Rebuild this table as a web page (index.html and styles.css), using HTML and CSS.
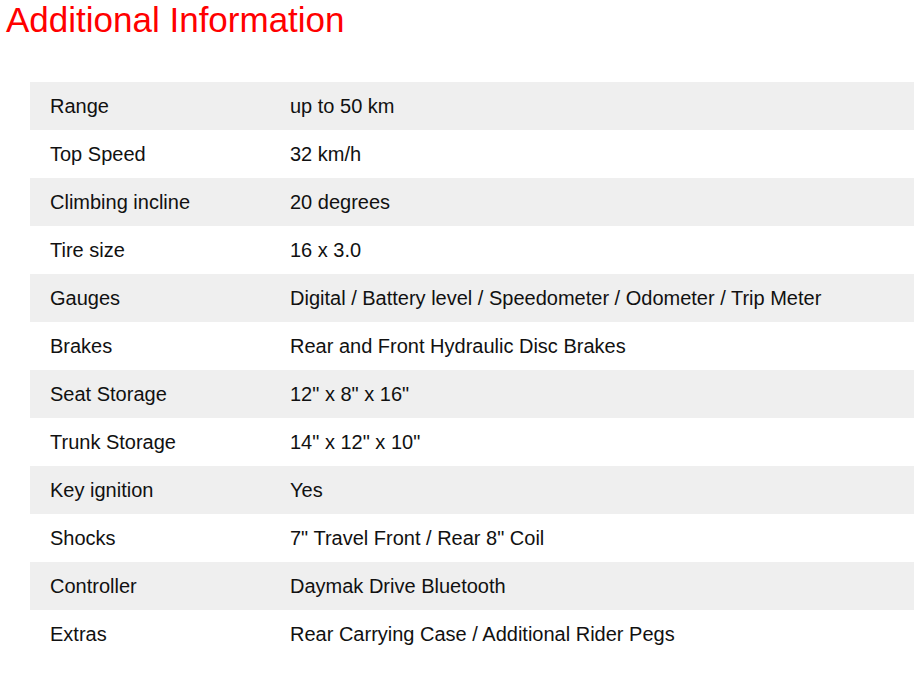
FILE: index.html
```html
<!DOCTYPE html>
<html>
<head>
<meta charset="utf-8">
<link rel="stylesheet" href="styles.css">
</head>
<body>
<h1 class="title">Additional Information</h1>
<table class="specs">
<tbody>
<tr><td class="label">Range</td><td>up to 50 km</td></tr>
<tr><td class="label">Top Speed</td><td>32 km/h</td></tr>
<tr><td class="label">Climbing incline</td><td>20 degrees</td></tr>
<tr><td class="label">Tire size</td><td>16 x 3.0</td></tr>
<tr><td class="label">Gauges</td><td>Digital / Battery level / Speedometer / Odometer / Trip Meter</td></tr>
<tr><td class="label">Brakes</td><td>Rear and Front Hydraulic Disc Brakes</td></tr>
<tr><td class="label">Seat Storage</td><td>12" x 8" x 16"</td></tr>
<tr><td class="label">Trunk Storage</td><td>14" x 12" x 10"</td></tr>
<tr><td class="label">Key ignition</td><td>Yes</td></tr>
<tr><td class="label">Shocks</td><td>7" Travel Front / Rear 8" Coil</td></tr>
<tr><td class="label">Controller</td><td>Daymak Drive Bluetooth</td></tr>
<tr><td class="label">Extras</td><td>Rear Carrying Case / Additional Rider Pegs</td></tr>
</tbody>
</table>
</body>
</html>
```
FILE: styles.css
```css
html, body {
  margin: 0;
  padding: 0;
  background: #fff;
  overflow: hidden;
}
body {
  font-family: "Liberation Sans", Arial, sans-serif;
}
.title {
  margin: 0;
  padding-left: 6px;
  font-size: 35px;
  font-weight: normal;
  color: #ff0000;
  line-height: 40px;
}
.specs {
  margin: 42px 0 0 30px;
  width: 884px;
  border-collapse: collapse;
  font-size: 20px;
  color: #111111;
}
.specs tr:nth-child(odd) {
  background: #efefef;
}
.specs td {
  height: 48px;
  padding: 1px 20px 0;
  vertical-align: middle;
  box-sizing: border-box;
}
.specs td.label {
  width: 240px;
}
```
